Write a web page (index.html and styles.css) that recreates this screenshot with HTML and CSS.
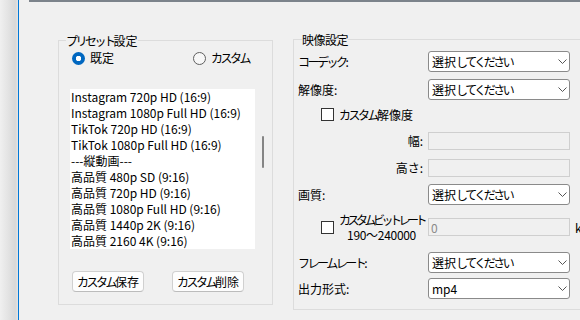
FILE: index.html
```html
<!DOCTYPE html>
<html lang="ja">
<head>
  <meta charset="UTF-8" />
  <meta name="viewport" content="width=device-width, initial-scale=1" />
  <title>変換設定</title>
  <link rel="stylesheet" href="styles.css">
</head>
<body>
<div class="screen">
  <div class="shadow"></div>
  <div class="window">
    <div class="topbar"></div>
    <div class="panels">

      <!-- プリセット -->
      <fieldset class="group preset">
        <legend><span class="kana">プリセット</span>設定</legend>
        <div class="radios">
          <label class="radio"><span class="dot on"></span>既定</label>
          <label class="radio"><span class="dot"></span><span class="kana">カスタム</span></label>
        </div>
        <div class="listbox">
          <ul class="items">
            <li>Instagram 720p HD (16:9)</li>
            <li>Instagram 1080p Full HD (16:9)</li>
            <li>TikTok 720p HD (16:9)</li>
            <li>TikTok 1080p Full HD (16:9)</li>
            <li>---縦動画---</li>
            <li>高品質 480p SD (9:16)</li>
            <li>高品質 720p HD (9:16)</li>
            <li>高品質 1080p Full HD (9:16)</li>
            <li>高品質 1440p 2K (9:16)</li>
            <li>高品質 2160 4K (9:16)</li>
          </ul>
          <div class="vscroll"><div class="thumb"></div></div>
        </div>
        <div class="buttons">
          <button><span class="kana">カスタム</span>保存</button>
          <button><span class="kana">カスタム</span>削除</button>
        </div>
      </fieldset>

      <!-- 映像 -->
      <fieldset class="group video">
        <legend>映像設定</legend>
        <div class="row first">
          <span class="lbl"><span class="kana">コーデック</span>:</span>
          <div class="combo"><span>選択<span class="kana">してください</span></span><svg width="9" height="5" viewBox="0 0 9 5"><path d="M0.5 0.5L4.5 4.5L8.5 0.5" fill="none" stroke="#555" stroke-width="1"/></svg></div>
        </div>
        <div class="row">
          <span class="lbl">解像度:</span>
          <div class="combo"><span>選択<span class="kana">してください</span></span><svg width="9" height="5" viewBox="0 0 9 5"><path d="M0.5 0.5L4.5 4.5L8.5 0.5" fill="none" stroke="#555" stroke-width="1"/></svg></div>
        </div>
        <div class="row check">
          <span class="lbl"><span class="box"></span><span><span class="kana">カスタム</span>解像度</span></span>
        </div>
        <div class="row size">
          <span class="lbl right">幅:</span>
          <div class="field"></div>
        </div>
        <div class="row size">
          <span class="lbl right">高さ:</span>
          <div class="field"></div>
        </div>
        <div class="row">
          <span class="lbl">画質:</span>
          <div class="combo"><span>選択<span class="kana">してください</span></span><svg width="9" height="5" viewBox="0 0 9 5"><path d="M0.5 0.5L4.5 4.5L8.5 0.5" fill="none" stroke="#555" stroke-width="1"/></svg></div>
        </div>
        <div class="row bitrate">
          <span class="lbl"><span class="box"></span><span class="twoline"><span class="l1">カスタムビットレート</span><span class="l2">190～240000</span></span></span>
          <div class="field">0</div>
          <span class="unit">kbps</span>
        </div>
        <div class="row fps">
          <span class="lbl"><span class="kana">フレームレート</span>:</span>
          <div class="combo"><span>選択<span class="kana">してください</span></span><svg width="9" height="5" viewBox="0 0 9 5"><path d="M0.5 0.5L4.5 4.5L8.5 0.5" fill="none" stroke="#555" stroke-width="1"/></svg></div>
        </div>
        <div class="row out">
          <span class="lbl">出力形式:</span>
          <div class="combo"><span>mp4</span><svg width="9" height="5" viewBox="0 0 9 5"><path d="M0.5 0.5L4.5 4.5L8.5 0.5" fill="none" stroke="#555" stroke-width="1"/></svg></div>
        </div>
      </fieldset>

    </div>
  </div>
</div>
</body>
</html>
```
FILE: styles.css
```css
* {
  box-sizing: border-box;
}
body {
  margin: 0;
  width: 580px;
  height: 320px;
  overflow: hidden;
  background: #f0f0f0;
  font-family: "Segoe UI", "Noto Sans CJK JP", sans-serif;
  font-size: 12px;
  color: #000;
}
/* kana are narrower in the original UI font */
.kana {
  letter-spacing: -2.5px;
}
.screen {
  display: flex;
  height: 320px;
}
.shadow {
  width: 18px;
  flex: none;
  background: linear-gradient(to right, #f0f0f0, #d8d8d8 85%, #e4e4e4);
}
.window {
  flex: 1;
  min-width: 0;
  overflow: hidden;
  border-left: 1px solid #0078d7;
}
.topbar {
  height: 2px;
  margin-left: 10px;
  background: #7c838b;
}
.panels {
  display: flex;
  align-items: flex-start;
  padding-left: 39px;
}
.group {
  margin: 0;
  min-width: 0;
  border: 1px solid #dcdcdc;
}
.group legend {
  padding: 0;
  height: 15px;
  line-height: 15px;
}
.preset {
  width: 215px;
  flex: none;
  margin-top: 31px;
  padding: 2px 2px 12px 11px;
}
.preset legend {
  margin-left: -4px;
}
.video {
  width: 330px;
  flex: none;
  margin-left: 20px;
  margin-top: 30px;
  padding: 4px 0 10px 4px;
}
.video legend {
  margin-left: 4px;
  letter-spacing: -0.5px;
}
.radios {
  display: flex;
  align-items: center;
  height: 16px;
  padding-left: 2px;
}
.radio {
  display: flex;
  align-items: center;
  gap: 5px;
  line-height: 16px;
}
.radio:first-child {
  width: 121px;
}
.dot {
  width: 13px;
  height: 13px;
  border-radius: 50%;
  border: 1px solid #5f5f5f;
  background: #f7f7f7;
}
.dot.on {
  border: none;
  background: radial-gradient(circle, #fff 0 2.5px, #0067c0 3px);
}
.listbox {
  display: flex;
  height: 160px;
  margin-top: 23px;
}
.items {
  list-style: none;
  margin: 0;
  padding: 0 0 0 1px;
  width: 185px;
  background: #fff;
  overflow: hidden;
}
.items li {
  height: 16px;
  line-height: 16px;
  white-space: nowrap;
}
.vscroll {
  width: 15px;
  padding: 47px 0 0 7px;
}
.thumb {
  width: 2px;
  height: 32px;
  background: #858585;
  border-radius: 1px;
}
.buttons {
  display: flex;
  gap: 28px;
  margin-top: 22px;
  padding-left: 2px;
}
.buttons button {
  width: 72px;
  height: 21px;
  padding: 0;
  font: inherit;
  line-height: 19px;
  color: #000;
  background: #fdfdfd;
  border: 1px solid #d0d0d0;
  border-bottom-color: #bcbcbc;
  border-radius: 4px;
}
.row {
  display: flex;
  align-items: center;
  height: 21px;
  margin-top: 7px;
  white-space: nowrap;
}
.row.first {
  margin-top: 0;
}
.row.check {
  height: 19px;
  margin-top: 5px;
}
.row.size {
  height: 18px;
  margin-top: 8px;
}
.row.size + .row.size {
  margin-top: 9px;
}
.row.size + .row {
  margin-top: 7px;
}
.row.bitrate {
  height: 24px;
  margin-top: 10px;
}
.row.fps {
  margin-top: 13px;
}
.row.out {
  margin-top: 5px;
}
.lbl {
  width: 130px;
  flex: none;
  display: flex;
  align-items: center;
  line-height: 16px;
}
.lbl.right {
  justify-content: flex-end;
  padding-right: 5px;
}
.box {
  width: 13px;
  height: 13px;
  flex: none;
  margin: 0 5px 0 23px;
  border: 1px solid #333;
  background: #fff;
}
.twoline {
  display: flex;
  flex-direction: column;
  align-items: center;
  width: 85px;
  line-height: 15px;
}
.l1 {
  letter-spacing: -3.5px;
}
.l2 {
  letter-spacing: -0.3px;
}
.combo {
  width: 142px;
  height: 100%;
  display: flex;
  align-items: center;
  justify-content: space-between;
  padding: 0 2px 0 3px;
  background: #fff;
  border: 1px solid #8a8a8a;
  border-radius: 3px;
}
.field {
  width: 142px;
  height: 18px;
  display: flex;
  align-items: center;
  padding-left: 2px;
  color: #8a8a8a;
  background: #f0f0f0;
  border: 1px solid #cfcfcf;
}
.unit {
  margin-left: 5px;
}
```
